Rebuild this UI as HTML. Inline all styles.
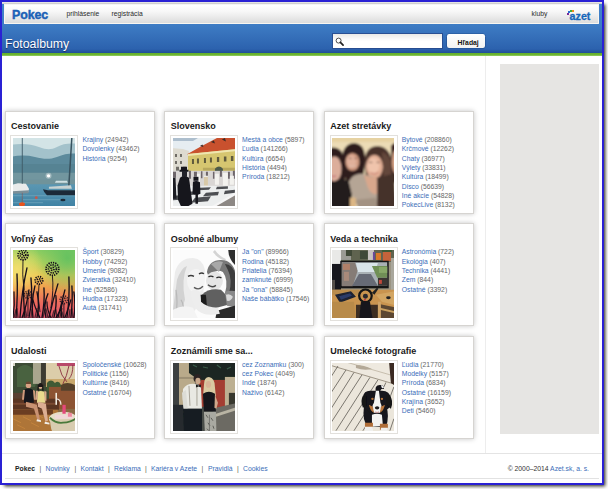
<!DOCTYPE html><html lang="sk"><head><meta charset="utf-8"><title>Fotoalbumy - Pokec</title><style>
html,body{margin:0;padding:0;background:#fff;}
body{width:608px;height:489px;position:relative;overflow:hidden;font-family:"Liberation Sans",Arial,sans-serif;font-size:6.8px;color:#333;}
*{box-sizing:border-box;}
.abs{position:absolute;}
#frame{left:0;top:0;width:604px;height:485px;border:2px solid #2a21d4;box-shadow:2.75px 2.75px 3.5px -0.75px rgb(40,40,28);z-index:50;}
#hdr{left:2px;top:2px;width:600px;height:51px;background:linear-gradient(#4384cb 0%,#3e7cc4 45%,#2c62ae 92%,#1f4f98 100%);}
#strip{left:2px;top:2px;width:600px;height:2px;background:linear-gradient(#e4e4e2 0,#e4e4e2 50%,#cfcfcf 50%,#cfcfcf 100%);}
#topbar{left:4px;top:4px;width:595px;height:19.6px;background:linear-gradient(#ececec 0%,#ffffff 6%,#f7f7f7 40%,#dcdcdc 100%);border:1px solid #f8f6f1;border-top:none;border-radius:0 0 1px 1px;}
#green{left:2px;top:53px;width:600px;height:3px;background:linear-gradient(#63ad2b,#6db633 60%,#9ad06c);}
#logo{left:12.1px;top:7.6px;font-size:12.4px;font-weight:bold;color:#1b62b7;letter-spacing:-0.1px;line-height:15px;-webkit-text-stroke:0.45px #1b62b7;}
.nav{top:10.3px;line-height:8px;color:#2a2a2a;font-size:6.75px;}
#azet{left:569.6px;top:9.9px;font-size:10.7px;font-weight:bold;color:#1667ba;line-height:12px;-webkit-text-stroke:0.3px #1667ba;}
.dot{width:1.9px;height:1.8px;}
#h1{left:5px;top:36.5px;font-size:12.3px;line-height:14px;color:#fff;text-shadow:0 1px 1px rgba(10,30,80,.8);}
#search{left:332px;top:33px;width:111px;height:16px;background:linear-gradient(#e9e9e7,#fbfbfb 40%,#fff 55%);border:1px solid rgba(18,60,135,.9);}
#btn{left:447.2px;top:33.8px;width:37.4px;height:14.3px;background:linear-gradient(#fff,#f2f2f2);border-radius:2.2px;box-shadow:0 0 0 0.6px rgba(20,60,120,.6);}
#btn span{position:absolute;left:10.4px;top:5.2px;font-weight:bold;color:#111;line-height:8px;}
#vline{left:485px;top:56px;width:1px;height:397px;background:#ededed;}
#ad{left:500px;top:64px;width:99px;height:370px;background:#e6e5e3;}
#fline{left:2px;top:453px;width:600px;height:1px;background:#e4e4e4;}
#bline{left:5px;top:478.4px;width:594px;height:1px;background:#e2e2e2;}
.ft{top:464.9px;line-height:8px;color:#333;white-space:pre;}
.ft b{color:#222;}
.sep{color:#555;}
#copy{right:19px;}
a{color:#3b6db8;text-decoration:none;}
.card{width:150px;height:103px;background:#fff;border:1px solid #d6d4d1;box-shadow:0 0 5px rgba(0,0,0,.23);}
.title{font-size:9px;font-weight:bold;color:#1a1a1a;line-height:10px;white-space:nowrap;}
.fr{width:68px;height:74px;background:#fff;border:1px solid #e2e0dc;}
.ph{width:61.9px;height:67.7px;display:block;}
.list{line-height:9.29px;white-space:nowrap;color:#666;}
</style></head><body>
<div id="hdr" class="abs"></div><div id="strip" class="abs"></div><div id="topbar" class="abs"></div><div id="green" class="abs"></div>
<div id="logo" class="abs">Pokec</div>
<div class="abs nav" style="left:66.6px">prihlásenie</div><div class="abs nav" style="left:111.6px">registrácia</div><div class="abs nav" style="left:531.6px">kluby</div>
<div id="azet" class="abs">azet</div>
<div class="abs dot" style="left:567.2px;top:13.0px;background:#7a2a9a"></div>
<div class="abs dot" style="left:568.3px;top:11.0px;background:#2a6fd0"></div>
<div class="abs dot" style="left:570.0px;top:9.9px;background:#3fae3a"></div>
<div class="abs dot" style="left:572.3px;top:9.9px;background:#f08a1c"></div>
<div id="h1" class="abs">Fotoalbumy</div>
<div id="search" class="abs"></div>
<svg class="abs" style="left:335px;top:36.5px" width="10" height="10" viewBox="0 0 10 10"><circle cx="3.6" cy="3.6" r="2.5" fill="#fff" stroke="#3a3a3a" stroke-width="0.9"/><path d="M5.4 5.4 L8.1 8.1" stroke="#222" stroke-width="1.7" stroke-linecap="round"/></svg>
<div id="btn" class="abs"><span>Hľadaj</span></div>
<div id="vline" class="abs"></div><div id="ad" class="abs"></div><div id="fline" class="abs"></div><div id="bline" class="abs"></div>
<div class="abs card" style="left:5px;top:111px"></div>
<div class="abs title" style="left:11px;top:121.1px">Cestovanie</div>
<div class="abs fr" style="left:10px;top:135px"></div>
<svg class="abs ph" style="left:13.1px;top:138px" viewBox="0 0 62 68" preserveAspectRatio="none"><defs><filter id="b0" x="-10%" y="-10%" width="120%" height="120%"><feGaussianBlur stdDeviation="0.45"/></filter>
<linearGradient id="w0" x1="0" y1="0" x2="0" y2="1"><stop offset="0" stop-color="#5b97b2"/><stop offset="1" stop-color="#3d80a2"/></linearGradient></defs>
<g filter="url(#b0)">
<rect x="-3" y="-3" width="68" height="74" fill="#d3e4e6"/>
<path d="M-3 7 C8 5 18 6 26 9 S38 12 44 9 S56 5 65 6 V30 H-3Z" fill="#a3c2cb"/>
<path d="M-3 19 C6 17 14 17 22 19 S36 22 44 19 S58 15 65 16 V50 H-3Z" fill="#5b8a9c"/>
<path d="M-3 26 H65 V48 H-3Z" fill="#557f8d" opacity=".6"/>
<path d="M-3 35 H65 V47 H-3Z" fill="#7b9ca3" opacity=".75"/>
<path d="M-3 42 H65 V47 H-3Z" fill="#6e9199" opacity=".7"/>
<rect x="-3" y="46.5" width="68" height="25" fill="url(#w0)"/>
<path d="M0 58 H62 M10 62 H50 M0 65 H30 M35 53 H62" stroke="#86b7c9" stroke-width="0.8" opacity=".6"/>
<path d="M-1 47 L5 45.5 L13 46 L16 51 L15.5 54 L-1 55Z" fill="#e9ebea"/>
<path d="M-1 53.5 L16 52.5 L15.5 55.5 L-1 56Z" fill="#7b8f98"/>
<path d="M9.3 -1 V46" stroke="#3c5a66" stroke-width="0.9"/>
<path d="M9.3 55 V66" stroke="#a04030" stroke-width="0.6" opacity=".7"/>
<path d="M59 -1 L55.8 50" stroke="#39525e" stroke-width="1.5"/>
<path d="M43 43 H54 L55 45 H42Z" fill="#cfe0e2"/>
<path d="M36 49 L58 47.5 L59 51 H36Z" fill="#c9d3d2"/>
<path d="M30 51.5 L35 52.5 H63 V57.5 H34 Q31 55 30 51.5Z" fill="#1d2c38"/>
<circle cx="35.6" cy="38" r="1.7" fill="#fff"/>
<circle cx="35.6" cy="38" r="3" fill="#fff" opacity=".35"/>
<ellipse cx="9" cy="66.5" rx="3" ry="2" fill="#e8521e"/>
<circle cx="23.3" cy="60" r="1.4" fill="#c9584a"/>
<ellipse cx="50" cy="62.3" rx="2.6" ry="1.2" fill="#1d2c38"/>
</g>
</svg>
<div class="abs list" style="left:82.4px;top:135.05px"><a>Krajiny</a> (24942)<br><a>Dovolenky</a> (43462)<br><a>História</a> (9254)</div>
<div class="abs card" style="left:164px;top:111px"></div>
<div class="abs title" style="left:170.7px;top:121.1px">Slovensko</div>
<div class="abs fr" style="left:170px;top:135px"></div>
<svg class="abs ph" style="left:172.8px;top:138px" viewBox="0 0 62 68" preserveAspectRatio="none"><defs><filter id="b1" x="-10%" y="-10%" width="120%" height="120%"><feGaussianBlur stdDeviation="0.45"/></filter></defs>
<g filter="url(#b1)">
<rect x="-3" y="-3" width="68" height="74" fill="#e6edf1"/>
<path d="M-3 -3 H30 L20 3 H-3Z" fill="#9fb2c4" opacity=".8"/>
<path d="M-3 10 L10 11 L16 13 V35 H-3Z" fill="#dedbd0"/>
<path d="M2 16 h2 v3 h-2z M7 16 h2 v3 h-2z M2 23 h2 v3 h-2z M7 23 h2 v3 h-2z M3 29 h3 v4 h-3z M10 29 h3 v4 h-3z" fill="#6f6d66"/>
<path d="M14.5 16 L27 9 L44 0 L65 -1 V12 L14.5 16.5Z" fill="#c9512d"/>
<path d="M27 8 l2.5 -1.5 l1 2.5 z M38 4 l3 -1.5 l1 3 z M49 1.5 l3 -1.5 l1 3.5z" fill="#3b2a26"/>
<path d="M15 16 L65 11 V36 H15Z" fill="#d6c66f"/>
<path d="M15 16 L65 11 V13 L15 18Z" fill="#efe6b0"/>
<path d="M19 21 h2 v5 h-2z M24 20.5 h2 v5 h-2z M31 20 h2 v5 h-2z M37 19.500 h2 v5 h-2z M44 19 h2.300 v5 h-2.300z M51 18.500 h2.500 v5 h-2.500z M58 18 h2.500 v5 h-2.500z" fill="#5f5a3c"/>
<path d="M30 30 H62 V33 H30Z" fill="#b8a85c"/>
<path d="M42 36 V31 Q46 26.500 50 31 V36Z" fill="#4d5a48"/>
<rect x="-3" y="33" width="68" height="16" fill="#d9d6d4"/>
<path d="M0 34 h3 v6 h-3z M16 33 h2 v8 h-2z M21 34 h3 v5 h-3z M28 33.500 h1.500 v7 h-1.500z M33 34 h2 v5 h-2z M40 34 h1.500 v7 h-1.500z M47 33 h2 v6 h-2z M55 34 h2 v7 h-2z M60 33 h2 v8 h-2z" fill="#4a4048" opacity=".75"/>
<path d="M24 36 h3 v10 h-3z M31 38 h4 v11 h-4z M42 36 h4 v11 h-4z M50 35 h5 v13 h-5z M57 38 h4 v9 h-4z" fill="#f3f2ee"/>
<path d="M31 39 h4 v9 h-4z" fill="#d8c9a8"/>
<rect x="-3" y="48" width="68" height="23" fill="#eceeee"/>
<path d="M27 50 L38 49.500 L36 52 L25 52.500Z M44 49 L55 48.500 L55 51 L43 51.500Z M33 55 L46 54 L45 57.500 L30 58.500Z M52 53 L62 52 L62 55 L51 56.500Z M22 60 L38 58.500 L35 63.500 L18 65Z M14 54 L24 53.500 L22 57 L13 57.500Z M0 58 L8 57.500 L7 62 L0 62.500Z" fill="#4d4f52"/>
<path d="M65 55 L38 71 H65Z" fill="#8d8884"/>
<path d="M65 53.500 L36 70 L39 71 L65 56Z" fill="#f5f5f5"/>
<path d="M8 29 h6 v3 h1.500 v2 h-9 v-2 h1.500z" fill="#14141b"/>
<path d="M9 33 h5 v6 h-5z" fill="#22222a"/>
<path d="M7 40 Q11 37 16 40 L19.500 66 L15 68.500 H8 L5 62 L4.500 48Z" fill="#13131a"/>
<path d="M20.500 39 h5 v4 h-5z" fill="#15151c"/>
<path d="M20 44 Q23.500 42 27 44.500 L27.500 56 L25 57 V66 H22.500 V57 L19.500 56Z" fill="#16161d"/>
<path d="M-1 40 h3.500 l1 21 h-4.500z" fill="#1b1b22"/>
</g>
</svg>
<div class="abs list" style="left:242.1px;top:135.05px"><a>Mestá a obce</a> (5897)<br><a>Ľudia</a> (141266)<br><a>Kultúra</a> (6654)<br><a>História</a> (4494)<br><a>Príroda</a> (18212)</div>
<div class="abs card" style="left:324px;top:111px"></div>
<div class="abs title" style="left:330.3px;top:121.1px">Azet stretávky</div>
<div class="abs fr" style="left:330px;top:135px"></div>
<svg class="abs ph" style="left:332.4px;top:138px" viewBox="0 0 62 68" preserveAspectRatio="none"><defs><filter id="b2" x="-10%" y="-10%" width="120%" height="120%"><feGaussianBlur stdDeviation="0.85"/></filter></defs>
<g filter="url(#b2)">
<rect x="-3" y="-3" width="68" height="74" fill="#ecdcb6"/>
<rect x="-3" y="-3" width="68" height="7" fill="#e6d2a2"/>
<path d="M-3 10 Q5 8 10 14 Q14 22 13 40 L12 71 H-3Z" fill="#2d1e1f"/>
<path d="M11 14 Q14 5 23 5 Q32 6 33 18 Q34 30 30 40 L14 44 Q11 30 11 14Z" fill="#2e1c1a"/>
<path d="M33 20 Q35 8 46 8 Q58 9 60 24 L62 71 H40 L34 40Z" fill="#48302a"/>
<path d="M50 14 Q58 16 60 28 L61 50 L52 44Z" fill="#64463a"/>
<path d="M59 8 Q62 4 65 5 V45 H60Z" fill="#3a2420"/>
<ellipse cx="64" cy="24" rx="4" ry="12" fill="#d8a487"/>
<ellipse cx="2.500" cy="31" rx="7" ry="12.500" fill="#dcae9b"/>
<path d="M-1 38 q3 1.500 5 0" stroke="#b8586a" stroke-width="1.200" fill="none" opacity=".8"/>
<ellipse cx="20.500" cy="24" rx="7" ry="9" fill="#d09a80"/>
<ellipse cx="19.500" cy="23" rx="5" ry="6" fill="#e0b09a"/>
<path d="M16.500 28 q4 2.500 8 -0.500" stroke="#ecd8cc" stroke-width="1" fill="none" opacity=".8"/>
<ellipse cx="42.500" cy="29" rx="8.500" ry="12" fill="#e4b096"/>
<ellipse cx="41.500" cy="28" rx="6" ry="8" fill="#f0c4ac"/>
<path d="M38.500 35 q4 2.300 8 -0.300" stroke="#b8605a" stroke-width="1" fill="none" opacity=".8"/>
<path d="M37 24.500 h3.500 M44.500 24.500 h3.500 M17 20.500 h2.500 M22.500 20.500 h2.500" stroke="#4a2e28" stroke-width="0.900" opacity=".8"/>
<path d="M-3 46 L8 41 L17 43 L20 56 L20 71 H-3Z" fill="#221c1f"/>
<path d="M17 44 Q20 36 30 36 L46 40 L45 66 L30 71 L22 64Z" fill="#b5a595"/>
<path d="M32 37 Q40 41 45 38 L45 56 Q40 58 36 50Z" fill="#d9a78c"/>
<path d="M18 60 h6 v11 h-6z" fill="#dcb684"/>
<path d="M24 62 L44 60 L46 71 H26Z" fill="#a39282"/>
<path d="M45 40 L62 36 L65 71 H46Z" fill="#45302a"/>
</g>
</svg>
<div class="abs list" style="left:401.8px;top:135.05px"><a>Bytové</a> (208860)<br><a>Krčmové</a> (12262)<br><a>Chaty</a> (36977)<br><a>Výlety</a> (33831)<br><a>Kultúra</a> (18499)<br><a>Disco</a> (56639)<br><a>Iné akcie</a> (54828)<br><a>PokecLive</a> (8132)</div>
<div class="abs card" style="left:5px;top:223px"></div>
<div class="abs title" style="left:11px;top:233.5px">Voľný čas</div>
<div class="abs fr" style="left:10px;top:247.4px"></div>
<svg class="abs ph" style="left:13.1px;top:250.3px" viewBox="0 0 62 68" preserveAspectRatio="none"><defs><filter id="b3" x="-10%" y="-10%" width="120%" height="120%"><feGaussianBlur stdDeviation="0.35"/></filter>
<linearGradient id="g3" x1="0" y1="0" x2="0" y2="1"><stop offset="0" stop-color="#7fcb63"/><stop offset=".2" stop-color="#b5d25c"/><stop offset=".38" stop-color="#ecc855"/><stop offset=".55" stop-color="#f1a04e"/><stop offset=".75" stop-color="#ec6a5c"/><stop offset="1" stop-color="#de5070"/></linearGradient>
<radialGradient id="g3b" cx=".85" cy=".15" r=".5"><stop offset="0" stop-color="#5fc060" stop-opacity=".9"/><stop offset="1" stop-color="#5fc060" stop-opacity="0"/></radialGradient>
<radialGradient id="g3c" cx=".1" cy=".3" r=".4"><stop offset="0" stop-color="#f5e070" stop-opacity=".9"/><stop offset="1" stop-color="#f5e070" stop-opacity="0"/></radialGradient>
</defs>
<g filter="url(#b3)">
<rect x="-3" y="-3" width="68" height="74" fill="url(#g3)"/>
<rect x="-3" y="-3" width="68" height="74" fill="url(#g3b)"/>
<rect x="-3" y="-3" width="68" height="74" fill="url(#g3c)"/>
<g fill="none" stroke="#15101a" stroke-linecap="round">
<g stroke-width="1.700" stroke-dasharray="1.300 1" stroke-linecap="butt">
<circle cx="10" cy="5" r="5"/><circle cx="10" cy="5" r="2.800"/><circle cx="10" cy="5" r="0.800"/>
<circle cx="39.500" cy="19" r="6.400"/><circle cx="39.500" cy="19" r="4"/><circle cx="39.500" cy="19" r="1.600"/>
<circle cx="26" cy="30.500" r="3.800"/><circle cx="26" cy="30.500" r="1.600"/>
<circle cx="15" cy="45" r="3.600" opacity=".8"/><circle cx="15" cy="45" r="1.500" opacity=".8"/>
<circle cx="51" cy="50" r="3.800" opacity=".8"/><circle cx="51" cy="50" r="1.600" opacity=".8"/>
</g>
<path d="M10 10 Q9 25 11 40 M39.500 26 Q41 40 38 58 M26 35 Q24 48 27 62 M51 54 V68 M15 49 V66" stroke-width="0.900"/>
<path d="M3 68 Q5 45 4 24 M7 68 Q9 40 14 18 M12 68 Q10 50 11 30 M16 68 Q20 48 18 28 M20 68 Q18 52 22 36 M24 68 Q27 55 24 42 M29 68 Q32 52 31 38 M33 68 Q30 55 35 44 M36 68 Q40 50 45 34 M41 68 Q44 55 43 46 M45 68 Q48 56 52 40 M49 68 Q47 58 50 52 M54 68 Q57 48 56 27 M58 68 Q60 50 59 36 M61 68 Q63 55 61 42" stroke-width="1.350"/>
<path d="M0 68 Q2 55 1 42 M9 68 Q14 55 16 40 M27 68 Q22 58 20 50 M38 68 Q34 60 34 52 M52 68 Q55 60 58 50 M43 68 Q47 62 48 58" stroke-width="1.200"/>
<path d="M1 68 l2 -8 M5 68 l-1 -9 M10 68 l2 -7 M14 68 l-2 -10 M18 68 l1 -8 M22 68 l2 -9 M26 68 l-1 -7 M30 68 l2 -8 M35 68 l-2 -9 M39 68 l2 -7 M44 68 l-1 -8 M47 68 l2 -9 M51 68 l-2 -6 M56 68 l1 -8 M60 68 l-1 -9" stroke-width="1.300" opacity=".7"/>
</g>
</g>
</svg>
<div class="abs list" style="left:82.4px;top:247.45px"><a>Šport</a> (30829)<br><a>Hobby</a> (74292)<br><a>Umenie</a> (9082)<br><a>Zvieratká</a> (32410)<br><a>Iné</a> (52586)<br><a>Hudba</a> (17323)<br><a>Autá</a> (31741)</div>
<div class="abs card" style="left:164px;top:223px"></div>
<div class="abs title" style="left:170.7px;top:233.5px">Osobné albumy</div>
<div class="abs fr" style="left:170px;top:247.4px"></div>
<svg class="abs ph" style="left:172.8px;top:250.3px" viewBox="0 0 62 68" preserveAspectRatio="none"><defs><filter id="b4" x="-10%" y="-10%" width="120%" height="120%"><feGaussianBlur stdDeviation="0.75"/></filter></defs>
<g filter="url(#b4)">
<rect x="-3" y="-3" width="68" height="74" fill="#fcfcfc"/>
<path d="M55 -3 H65 V17 Q59 14 56 5Z" fill="#2e2e2e"/>
<path d="M42 0 Q46 6 53 9 L52 11 Q44 8 40 2Z" fill="#d4d4d4"/>
<path d="M2 22 Q6 8 20 8 Q30 9 32 20 L30 50 L14 71 H-3 L0 40Z" fill="#ececec"/>
<path d="M4 30 Q8 18 14 16 Q8 30 12 50 L6 68 L0 60Z" fill="#d2d2d2"/>
<path d="M8 50 Q12 56 10 68 M3 40 Q5 52 3 64" stroke="#b8b8b8" stroke-width="1.200" fill="none"/>
<ellipse cx="23" cy="31" rx="9" ry="12" fill="#f4f4f4"/>
<path d="M15 26.500 q3 -1.800 6 0 M26 24 q3 -1.800 5 0" stroke="#3a3a3a" stroke-width="1.300" fill="none"/>
<path d="M21 37.500 q5 3.500 9 -1" stroke="#5a5a5a" stroke-width="1.400" fill="none"/>
<path d="M34 22 Q36 10 48 10 Q60 10 63 24 Q65 36 60 46 L52 44 Q56 30 50 22 Q42 18 36 28Z" fill="#787878"/>
<path d="M38 14 Q44 10 50 12 L46 22Z" fill="#a8a8a8"/>
<path d="M52 14 Q60 14 63 26 Q64 38 60 46 L56 44 Q60 30 55 20Z" fill="#3c3c3c"/>
<ellipse cx="41.500" cy="31" rx="8.500" ry="9.500" fill="#e6e6e6"/>
<path d="M35.500 27 q2.500 -1.500 5 0 M43.500 28 q2.500 -1.500 5 0" stroke="#2a2a2a" stroke-width="1.300" fill="none"/>
<path d="M35 35 q4 3.500 8 0.500" stroke="#4a4a4a" stroke-width="1.400" fill="none"/>
<path d="M29 45 Q36 38 48 40 L54 46 L55 55 L40 59 L29 55Z" fill="#606060"/>
<path d="M27.500 45 h5.500 l1 11 h-6z" fill="#1f1f1f"/>
<path d="M52 42 Q58 40 65 42 V58 L54 56Z" fill="#8a8a8a"/>
<path d="M53 45 q4 -2 7 2 q-2 5 -6 4z" fill="#d8d8d8"/>
<path d="M44 61 L65 55 V71 H42Z" fill="#2c2c2c"/>
<path d="M17 42 Q22 38 27 42 L28 52 Q34 58 45 58 L47 64 Q30 68 22 58Z" fill="#ededed"/>
<path d="M0 60 Q10 54 20 58 L26 71 H-3Z" fill="#f4f4f4"/>
</g>
</svg>
<div class="abs list" style="left:242.1px;top:247.45px"><a>Ja &quot;on&quot;</a> (89966)<br><a>Rodina</a> (45182)<br><a>Priatelia</a> (76394)<br><a>zamknuté</a> (6999)<br><a>Ja &quot;ona&quot;</a> (58845)<br><a>Naše bábätko</a> (17546)</div>
<div class="abs card" style="left:324px;top:223px"></div>
<div class="abs title" style="left:330.3px;top:233.5px">Veda a technika</div>
<div class="abs fr" style="left:330px;top:247.4px"></div>
<svg class="abs ph" style="left:332.4px;top:250.3px" viewBox="0 0 62 68" preserveAspectRatio="none"><defs><filter id="b5" x="-10%" y="-10%" width="120%" height="120%"><feGaussianBlur stdDeviation="0.5"/></filter></defs>
<g filter="url(#b5)">
<rect x="-3" y="-3" width="68" height="74" fill="#9a9482"/>
<rect x="-3" y="-3" width="12" height="36" fill="#e9e9e7"/>
<rect x="9" y="-3" width="56" height="15" fill="#5f6450"/>
<path d="M9 0 h10 v10 h-10z" fill="#9b9b95"/>
<path d="M14 0 h6 v6 h-6z M28 1 h8 v8 h-8z" fill="#3f4a38"/>
<path d="M36 0 h6 v10 h-6z" fill="#c9c3c0"/>
<path d="M41 2 h2 v8 h-2z" fill="#6a4a9a"/>
<path d="M44 3 h5 v7 h-5z" fill="#d9782c"/>
<path d="M51 2 h8 v9 h-8z" fill="#c4643a"/>
<path d="M50 -1 h10 v3 h-10z" fill="#3d5a34"/>
<path d="M59 8 h6 v40 h-6z" fill="#a9a79c"/>
<path d="M0 14 h9 v26 h-9z" fill="#16161a"/>
<path d="M-1 30 h4 v10 h-4z" fill="#55504a"/>
<rect x="8.300" y="10.800" width="48.500" height="27.700" fill="#121214"/>
<rect x="9.800" y="12.300" width="45.500" height="23.800" fill="#a9b1b5"/>
<path d="M9.800 12.300 h13 l3 8 l-5 16 h-11z" fill="#857c76"/>
<path d="M11 14 h7 v6 h-7z" fill="#b08068"/>
<path d="M12 22 h5 v9 h-5z" fill="#a88a7a"/>
<path d="M24 13 h22 l-3 9 h-17z" fill="#d9e4e9"/>
<path d="M40 16 h15.300 v12 h-10z" fill="#6f8f56"/>
<path d="M47 17 h8.300 v6 h-8.300z" fill="#88a868"/>
<path d="M20 36.100 L27 24 h12 L46 36.100Z" fill="#666a74"/>
<path d="M46 28 h9.300 v8 h-9.300z" fill="#3a3430"/>
<path d="M47 30 h3 v4 h-3z" fill="#c0483a"/>
<path d="M-3 40 H65 V71 H-3Z" fill="#c9944f"/>
<path d="M-3 40 h30 v5 h-30z" fill="#b98c4e"/>
<path d="M3 45 L19 41.500 L24 47 L8 53 Z" fill="#1a2030"/>
<path d="M7 46.500 L18 43.500 L20 46 L9 50Z" fill="#2a3a68"/>
<path d="M-3 52 L22 52 L24 71 H-3Z" fill="#b88a4a"/>
<path d="M-3 54 h3 v17 h-3z" fill="#6a5030"/>
<path d="M24 55 L46 55 L46 71 H24Z" fill="#3c2e24"/>
<circle cx="33.500" cy="46" r="6.300" fill="none" stroke="#121214" stroke-width="2.200"/>
<circle cx="33.500" cy="46.500" r="2.500" fill="#2a2a2e"/>
<circle cx="33" cy="50" r="1" fill="#c0304a"/>
<path d="M29 52 h9 l3 19 h-14z" fill="#19191c"/>
<path d="M40 43 l5 -5 l1.500 1 l-4 6z" fill="#222"/>
<path d="M44 45 L65 41 V56 L50 52Z" fill="#d3a663"/>
<ellipse cx="56.500" cy="48" rx="2.300" ry="1.500" fill="#202024"/>
<path d="M46 54 L65 58 V71 H46Z" fill="#5c4630"/>
<path d="M48 58 L65 62 V64 L48 60Z" fill="#c9a060"/>
<path d="M46 52 h3 v19 h-3z" fill="#cfa468"/>
</g>
</svg>
<div class="abs list" style="left:401.8px;top:247.45px"><a>Astronómia</a> (722)<br><a>Ekológia</a> (407)<br><a>Technika</a> (4441)<br><a>Zem</a> (844)<br><a>Ostatné</a> (3392)</div>
<div class="abs card" style="left:5px;top:336px"></div>
<div class="abs title" style="left:11px;top:345.9px">Udalosti</div>
<div class="abs fr" style="left:10px;top:360px"></div>
<svg class="abs ph" style="left:13.1px;top:362.9px" viewBox="0 0 62 68" preserveAspectRatio="none"><defs><filter id="b6" x="-10%" y="-10%" width="120%" height="120%"><feGaussianBlur stdDeviation="0.55"/></filter></defs>
<g filter="url(#b6)">
<rect x="-3" y="-3" width="68" height="74" fill="#8a6a44"/>
<rect x="-3" y="-3" width="40" height="40" fill="#3c4c34"/>
<path d="M-3 -3 h5 v6 h-5z" fill="#d9d6c8"/>
<path d="M4 6 q8 -8 16 0 q6 8 2 18 h-18z" fill="#4a6240"/>
<path d="M20 -3 h10 v24 h-10z" fill="#a9a68e"/>
<path d="M28 -3 h5 v26 h-5z" fill="#3d3a30"/>
<path d="M33 -3 H65 V20 H33Z" fill="#dccdaa"/>
<path d="M33 16 H65 V24 H33Z" fill="#c9a86c"/>
<path d="M44 -3 H65 V3 H44Z" fill="#b8486a"/>
<path d="M46 3 q2 10 8 16 M56 3 q-2 10 -6 18 M60 2 q0 10 -4 14" stroke="#8a3040" stroke-width="0.900" fill="none"/>
<path d="M34 20 q4 -5 8 0 q4 -3 6 2 v6 h-14z" fill="#3f5a34"/>
<path d="M36 24 H65 V46 H36Z" fill="#8c5230"/>
<path d="M48 22 q6 -4 14 0 v6 h-14z" fill="#55402c"/>
<path d="M-3 30 H10 V44 H-3Z" fill="#5a4030"/>
<path d="M-3 36 H46 V47 H-3Z" fill="#5a3422"/>
<path d="M-3 40 H44 V42 H-3Z" fill="#7a4a30"/>
<path d="M-3 47 H45 V71 H-3Z" fill="#ae7438"/>
<path d="M-3 47 H40 V52 H-3Z" fill="#6a3c20"/>
<path d="M0 56 l8 4 M10 54 l8 4 M4 62 l8 4 M18 60 l8 4 M24 52 l6 3" stroke="#c4843c" stroke-width="0.900"/>
<ellipse cx="50" cy="56" rx="14" ry="7" fill="#e6dec8"/>
<path d="M37 57 Q38 71 42 71 H62 Q65 60 63 56Z" fill="#d8ccb0"/>
<path d="M37 55 q6 6 13 5 q8 0 14 -5" stroke="#4a7a3a" stroke-width="1.800" fill="none"/>
<path d="M42 52 h18 v4 h-18z" fill="#f0d8d8"/>
<rect x="49.500" y="42" width="3.300" height="9" fill="#e44a7c"/>
<path d="M55 50 h4 v4 h-4z" fill="#f08aa0"/>
<path d="M42.500 30 h1.600 v12 h-1.600z" fill="#f2ece0"/>
<path d="M43 36 q5 0 5 6" stroke="#f0e8e0" stroke-width="1.300" fill="none"/>
<circle cx="15.500" cy="22.500" r="2.700" fill="#d9a284"/>
<path d="M13 19.500 q2.500 -2 5 0 v1.500 h-5z" fill="#6a4a30"/>
<path d="M11 27 q4.500 -3 9 0 l1 13 h-10z" fill="#17171a"/>
<path d="M10 27 l2 0 l-1 10 l-2 0z M20 27 l2 1 l1 9 l-2 0z" fill="#d09a7c"/>
<path d="M13 39 L24 42 L27 57 L24.500 57.500 L21 46 L13 44Z" fill="#c99272"/>
<circle cx="27.500" cy="23.500" r="2.500" fill="#d8a88c"/>
<path d="M24.800 22 q2.700 -4 5.400 0 l0.500 6 h-1.500 v-4 h-3.400 v4 h-1.500z" fill="#1b1516"/>
<path d="M24.500 29 q3 -1.500 7 0 l1 11 h-8.500z" fill="#e9da8e"/>
<path d="M23 28 l2 0 l-0.500 9 l-1.800 0z M31.500 28 l2 1 l0 9 l-1.800 0z" fill="#d8a98c"/>
<path d="M25 39 L33 41 L35 58 L32.500 59 L29 46 L25 44Z" fill="#dcae92"/>
<path d="M24 56.500 l4 1 l0 1.800 l-4.500 -0.800z M32 59 l4.500 1 l0 1.800 l-5 -0.800z" fill="#f1efe8"/>
</g>
</svg>
<div class="abs list" style="left:82.4px;top:359.85px"><a>Spoločenské</a> (10628)<br><a>Politické</a> (1156)<br><a>Kultúrne</a> (8416)<br><a>Ostatné</a> (16704)</div>
<div class="abs card" style="left:164px;top:336px"></div>
<div class="abs title" style="left:170.7px;top:345.9px">Zoznámili sme sa...</div>
<div class="abs fr" style="left:170px;top:360px"></div>
<svg class="abs ph" style="left:172.8px;top:362.9px" viewBox="0 0 62 68" preserveAspectRatio="none"><defs><filter id="b7" x="-10%" y="-10%" width="120%" height="120%"><feGaussianBlur stdDeviation="0.6"/></filter></defs>
<g filter="url(#b7)">
<rect x="-3" y="-3" width="68" height="74" fill="#777468"/>
<rect x="-3" y="-3" width="10" height="74" fill="#3c4040"/>
<rect x="6" y="-3" width="16" height="50" fill="#b9aa8a"/>
<path d="M6 14 h14 v2 h-14z" fill="#9c8f74"/>
<path d="M16 -3 H65 V16 Q50 22 40 17 Q28 20 16 10Z" fill="#1c2822"/>
<path d="M20 2 l4 2 M30 4 l5 1 M44 2 l4 3 M54 6 l4 -2" stroke="#3a5a48" stroke-width="1.200"/>
<path d="M26 17 H53 V46 H26Z" fill="#a43c30"/>
<path d="M52 14 H65 V46 H52Z" fill="#bdb092"/>
<path d="M56 30 H65 V46 H56Z" fill="#38382f"/>
<path d="M38 46 L65 40 V71 H38Z" fill="#6c6b63"/>
<path d="M40 52 L65 44 V47 L40 55Z" fill="#b9b4a4"/>
<path d="M-3 42 H14 V71 H-3Z" fill="#262c2e"/>
<path d="M12 44 H40 V71 H12Z" fill="#4a4e4a"/>
<ellipse cx="24.500" cy="15.500" rx="4" ry="4.500" fill="#2a2422"/>
<ellipse cx="25" cy="18" rx="2.600" ry="3.200" fill="#c9a88c"/>
<path d="M10 26 Q14 20 22 21 L28 23 L29 46 L11 46 Q9 36 10 26Z" fill="#e9e9e3"/>
<path d="M9 30 l4 -3 l2 22 l-4 2z" fill="#dcdcd6"/>
<path d="M16 23 l1 20 M24 23 l0 20" stroke="#8a8478" stroke-width="0.700"/>
<path d="M23 21.500 l2.500 1 l2.500 -1 v3 l-2.500 -1 l-2.500 1z" fill="#1a1a1a"/>
<path d="M10 46 H29 L29 71 H11Z" fill="#161c20"/>
<path d="M31 22 Q31 14 36 14 Q42 15 42 24 L43 34 L38 30 L33 32 L30 34Z" fill="#d9c9a2"/>
<ellipse cx="35.500" cy="21.500" rx="2.600" ry="3.400" fill="#d8b498"/>
<path d="M30 31 Q36 27 42 31 L43 49 L31 49Z" fill="#14171a"/>
<path d="M42 32 l3 8 l-1.500 6 l-2 -1z" fill="#d0a88c"/>
<path d="M31 49 H43 L43.500 71 H32Z" fill="#a9a9a1"/>
<path d="M33 52 l2 3 M38 55 l2 3 M35 60 l2 3 M40 63 l1 3 M34 66 l2 2" stroke="#55554f" stroke-width="0.900"/>
<path d="M36.500 52 v19" stroke="#6a6a64" stroke-width="0.800"/>
</g>
</svg>
<div class="abs list" style="left:242.1px;top:359.85px"><a>cez Zoznamku</a> (300)<br><a>cez Pokec</a> (4049)<br><a>Inde</a> (1874)<br><a>Naživo</a> (6142)</div>
<div class="abs card" style="left:324px;top:336px"></div>
<div class="abs title" style="left:330.3px;top:345.9px">Umelecké fotografie</div>
<div class="abs fr" style="left:330px;top:360px"></div>
<svg class="abs ph" style="left:332.4px;top:362.9px" viewBox="0 0 62 68" preserveAspectRatio="none"><defs><filter id="b8" x="-10%" y="-10%" width="120%" height="120%"><feGaussianBlur stdDeviation="0.45"/></filter></defs>
<g filter="url(#b8)">
<rect x="-3" y="-3" width="68" height="74" fill="#ebe6db"/>
<path d="M-3 -3 H65 V22 L-3 2Z" fill="#eee9df"/>
<path d="M24 2 q8 0 16 4 q-8 2 -16 -1z" fill="#9a8c78" opacity=".7"/>
<path d="M-1 2.500 L62 21" stroke="#8a8070" stroke-width="0.800"/>
<path d="M7 -3 L62 13" stroke="#b5ab98" stroke-width="0.700"/>
<g stroke="#55514a" stroke-width="0.750">
<path d="M-1 14 L6 3"/><path d="M-1 30 L14 7"/><path d="M-1 46 L22 9.500"/><path d="M-1 60 L30 12"/><path d="M4 68 L38 14.500"/><path d="M13 68 L46 17"/><path d="M22 68 L36 46"/><path d="M31 68 L36 60"/><path d="M52 24 L54 19.500"/><path d="M56 40 L62 24"/><path d="M58 68 L62 56"/>
</g>
<path d="M57 -3 H65 V24 L59 20Z" fill="#3a2a22"/>
<path d="M44 30 Q42 22 48 22 Q53 22 52 26 Q48 25 48 31Z" fill="#15151a"/>
<path d="M49 22.500 q3 -0.500 3 2.500 l-2 0z" fill="#efefef"/>
<path d="M32 44 Q30 58 36 64 L54 64 Q58 54 54 42Z" fill="#16161b"/>
<path d="M31 34 Q32 27 40 28 L50 28 Q58 28 59 36 Q60 44 55 47 L50 52 L39 52 L34 47 Q30 42 31 34Z" fill="#15151a"/>
<path d="M31 33 Q28 38 31 45 L35 43 L35 33Z" fill="#121217"/>
<path d="M58 33 Q62 38 59 46 L55 43 L55 33Z" fill="#121217"/>
<path d="M44 28 L47 28 L48.500 40 Q51 44 48 50 L42 50 Q39 44 42 40Z" fill="#f4f4f2"/>
<path d="M37 42 Q38 48 42 50 L41 44Z M53 42 Q52 48 48 50 L49 44Z" fill="#b8763c"/>
<circle cx="40.500" cy="36" r="1.200" fill="#b8763c"/><circle cx="50" cy="36" r="1.200" fill="#b8763c"/>
<ellipse cx="45.200" cy="45" rx="2.200" ry="1.600" fill="#1a1a1e"/>
<path d="M43.500 48.500 q1.700 1.500 3.400 0 v1.500 h-3.400z" fill="#c88a8a"/>
<path d="M40 52 Q45 50 50 52 L51 63 L40 64Z" fill="#f3f3f1"/>
<path d="M33 60 h8 v6 h-8z M48 61 h8 v6 h-8z" fill="#b06e38"/>
<path d="M33 64 h8 v7 h-8z M49 65 h7 v6 h-7z" fill="#f0f0ee"/>
</g>
</svg>
<div class="abs list" style="left:401.8px;top:359.85px"><a>Ľudia</a> (21770)<br><a>Modelky</a> (5157)<br><a>Príroda</a> (6834)<br><a>Ostatné</a> (16159)<br><a>Krajina</a> (3652)<br><a>Deti</a> (5460)</div>
<div class="abs ft" style="left:15px"><b>Pokec</b></div>
<div class="abs ft" style="left:45.5px"><a>Novinky</a></div>
<div class="abs ft" style="left:80.5px"><a>Kontakt</a></div>
<div class="abs ft" style="left:114px"><a>Reklama</a></div>
<div class="abs ft" style="left:151px"><a>Kariéra v Azete</a></div>
<div class="abs ft" style="left:208px"><a>Pravidlá</a></div>
<div class="abs ft" style="left:243px"><a>Cookies</a></div>
<div class="abs ft sep" style="left:39.4px">|</div>
<div class="abs ft sep" style="left:74.4px">|</div>
<div class="abs ft sep" style="left:108px">|</div>
<div class="abs ft sep" style="left:145px">|</div>
<div class="abs ft sep" style="left:201.6px">|</div>
<div class="abs ft sep" style="left:237px">|</div>
<div id="copy" class="abs ft">© 2000–2014 <a>Azet.sk, a. s.</a></div>
<div id="frame" class="abs"></div>
</body></html>
